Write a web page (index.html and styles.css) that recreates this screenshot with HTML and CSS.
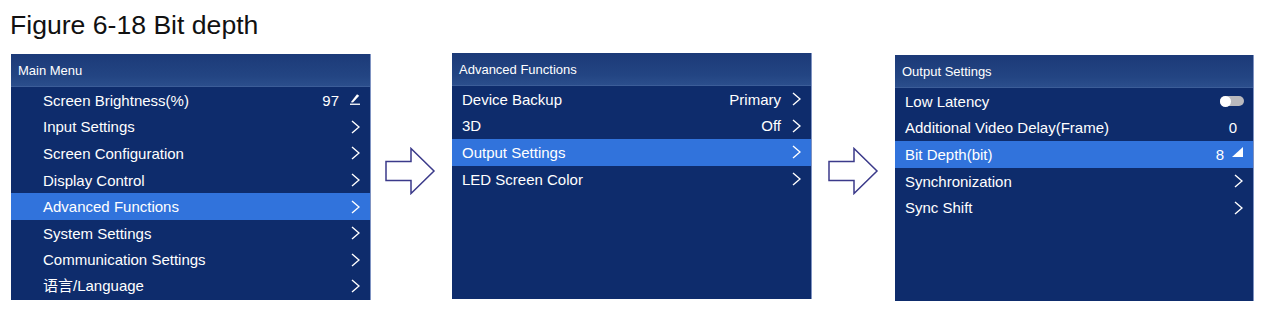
FILE: index.html
```html
<!DOCTYPE html>
<html lang="en">
<head>
<meta charset="utf-8">
<title>Figure 6-18 Bit depth</title>
<link rel="stylesheet" href="styles.css">
</head>
<body>
<h1 class="fig-title">Figure 6-18 Bit depth</h1>
<div class="flow">
  <section class="panel">
    <div class="panel-head">Main Menu</div>
    <ul class="menu menu-indent">
      <li class="row"><span class="label">Screen Brightness(%)</span><span class="value">97</span>
        <svg class="edit" viewBox="0 0 10 12" width="10" height="12"><polygon points="0.8,9.2 7,1.2 9.2,2.8 3,9.6" fill="#fff"/><rect x="0" y="10.6" width="10" height="1.3" fill="#fff"/></svg></li>
      <li class="row"><span class="label">Input Settings</span><svg class="chev" viewBox="0 0 9 14" width="9" height="14"><polyline points="1,1 8,7 1,13" fill="none" stroke="#fff" stroke-width="1.4"/></svg></li>
      <li class="row"><span class="label">Screen Configuration</span><svg class="chev" viewBox="0 0 9 14" width="9" height="14"><polyline points="1,1 8,7 1,13" fill="none" stroke="#fff" stroke-width="1.4"/></svg></li>
      <li class="row"><span class="label">Display Control</span><svg class="chev" viewBox="0 0 9 14" width="9" height="14"><polyline points="1,1 8,7 1,13" fill="none" stroke="#fff" stroke-width="1.4"/></svg></li>
      <li class="row active"><span class="label">Advanced Functions</span><svg class="chev" viewBox="0 0 9 14" width="9" height="14"><polyline points="1,1 8,7 1,13" fill="none" stroke="#fff" stroke-width="1.4"/></svg></li>
      <li class="row"><span class="label">System Settings</span><svg class="chev" viewBox="0 0 9 14" width="9" height="14"><polyline points="1,1 8,7 1,13" fill="none" stroke="#fff" stroke-width="1.4"/></svg></li>
      <li class="row"><span class="label">Communication Settings</span><svg class="chev" viewBox="0 0 9 14" width="9" height="14"><polyline points="1,1 8,7 1,13" fill="none" stroke="#fff" stroke-width="1.4"/></svg></li>
      <li class="row"><span class="label label-cjk">语言/Language</span><svg class="chev" viewBox="0 0 9 14" width="9" height="14"><polyline points="1,1 8,7 1,13" fill="none" stroke="#fff" stroke-width="1.4"/></svg></li>
    </ul>
  </section>

  <div class="arrow-slot arrow-a">
    <svg viewBox="0 0 52 48" width="52" height="48"><polygon points="2,14.5 27,14.5 27,1.5 50,24 27,46.5 27,33.5 2,33.5" fill="#fff" stroke="#3b3a8a" stroke-width="1.5" stroke-linejoin="miter"/></svg>
  </div>

  <section class="panel panel-up">
    <div class="panel-head">Advanced Functions</div>
    <ul class="menu">
      <li class="row"><span class="label">Device Backup</span><span class="value">Primary</span><svg class="chev" viewBox="0 0 9 14" width="9" height="14"><polyline points="1,1 8,7 1,13" fill="none" stroke="#fff" stroke-width="1.4"/></svg></li>
      <li class="row"><span class="label">3D</span><span class="value">Off</span><svg class="chev" viewBox="0 0 9 14" width="9" height="14"><polyline points="1,1 8,7 1,13" fill="none" stroke="#fff" stroke-width="1.4"/></svg></li>
      <li class="row active"><span class="label">Output Settings</span><svg class="chev" viewBox="0 0 9 14" width="9" height="14"><polyline points="1,1 8,7 1,13" fill="none" stroke="#fff" stroke-width="1.4"/></svg></li>
      <li class="row"><span class="label">LED Screen Color</span><svg class="chev" viewBox="0 0 9 14" width="9" height="14"><polyline points="1,1 8,7 1,13" fill="none" stroke="#fff" stroke-width="1.4"/></svg></li>
    </ul>
  </section>

  <div class="arrow-slot arrow-b">
    <svg viewBox="0 0 52 48" width="52" height="48"><polygon points="2,14.5 27,14.5 27,1.5 50,24 27,46.5 27,33.5 2,33.5" fill="#fff" stroke="#3b3a8a" stroke-width="1.5" stroke-linejoin="miter"/></svg>
  </div>

  <section class="panel panel-down">
    <div class="panel-head">Output Settings</div>
    <ul class="menu">
      <li class="row"><span class="label">Low Latency</span><span class="toggle"><span class="knob"></span></span></li>
      <li class="row"><span class="label">Additional Video Delay(Frame)</span><span class="value value-solo">0</span></li>
      <li class="row active"><span class="label">Bit Depth(bit)</span><span class="value">8</span>
        <svg class="corner" viewBox="0 0 11 10" width="11" height="10"><polygon points="0,10 11,10 11,0" fill="#fff"/></svg></li>
      <li class="row"><span class="label">Synchronization</span><svg class="chev" viewBox="0 0 9 14" width="9" height="14"><polyline points="1,1 8,7 1,13" fill="none" stroke="#fff" stroke-width="1.4"/></svg></li>
      <li class="row"><span class="label">Sync Shift</span><svg class="chev" viewBox="0 0 9 14" width="9" height="14"><polyline points="1,1 8,7 1,13" fill="none" stroke="#fff" stroke-width="1.4"/></svg></li>
    </ul>
  </section>
</div>
</body>
</html>
```

FILE: styles.css
```css
* { box-sizing: border-box; }

body {
  margin: 0;
  background: #ffffff;
  font-family: "Liberation Sans", Arial, "Noto Sans CJK SC", sans-serif;
  color: #000;
}

.fig-title {
  margin: 0;
  padding: 9px 0 0 10px;
  height: 54px;
  font-size: 26.6px;
  font-weight: normal;
  line-height: 32px;
  color: #111;
}

.flow {
  display: flex;
  align-items: flex-start;
  padding-left: 11px;
}

.panel {
  width: 360px;
  height: 246px;
  background: #0e2c6c;
  border-right: 1px solid #7f93c2;
  display: flex;
  flex-direction: column;
}
.panel-up { margin-top: -1px; }
.panel-down { margin-top: 1px; width: 359px; }

.panel-head {
  height: 33px;
  padding-left: 7px;
  display: flex;
  align-items: center;
  font-size: 13px;
  color: #ffffff;
  background: linear-gradient(to bottom, #1c3a78 0%, #234583 70%, #2b4e8c 100%);
  border-bottom: 1px solid #3c5d98;
}

.menu {
  list-style: none;
  margin: 0;
  padding: 0;
}

.row {
  height: 26.6px;
  display: flex;
  align-items: center;
  padding: 0 10px 0 10px;
  font-size: 15px;
  line-height: 17px;
  color: #ffffff;
}
.menu-indent .row { padding-left: 32px; }

.row.active { background: #3173dc; }

.label { flex: 1; white-space: nowrap; }
.label-cjk { margin-top: -2px; }

.value { margin-right: 11px; }
.value-solo { margin-right: 6px; }

.chev { display: block; }
.edit { display: block; margin-top: -3px; }
.corner { display: block; margin-left: -3px; margin-top: -5px; }

.toggle {
  width: 24px;
  height: 10px;
  border-radius: 5px;
  background: #b9b9bd;
  display: flex;
  align-items: center;
  margin-right: -1px;
}
.knob {
  width: 11px;
  height: 11px;
  border-radius: 50%;
  background: #ffffff;
}

.arrow-slot {
  display: flex;
  justify-content: center;
  margin-top: 93px;
}
.arrow-a { width: 81px; padding-right: 3px; }
.arrow-b { width: 83px; padding-right: 1px; }
```
